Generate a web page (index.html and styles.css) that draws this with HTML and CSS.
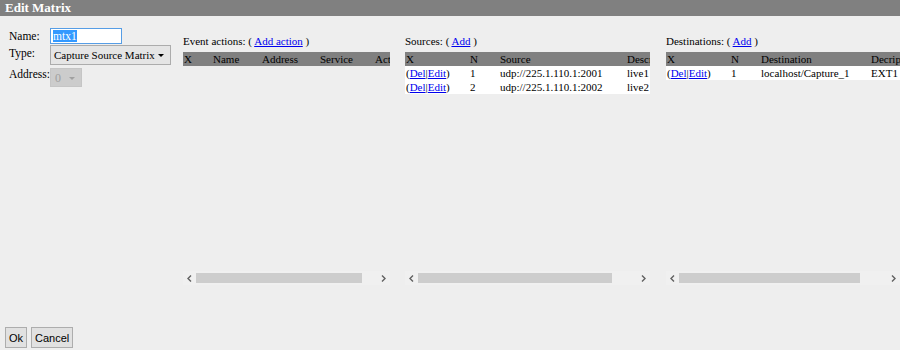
FILE: index.html
```html
<!DOCTYPE html>
<html lang="en">
<head>
  <meta charset="UTF-8">
  <title>Edit Matrix</title>
  <link rel="stylesheet" href="styles.css">
</head>
<body>
  <div class="titlebar">Edit Matrix</div>

  <div class="main">
    <div class="form">
      <div class="field">
        <label for="name">Name:</label>
        <input type="text" id="name" value="mtx1" autofocus>
      </div>
      <div class="field">
        <label>Type:</label>
        <span class="select type-select">Capture Source Matrix</span>
      </div>
      <div class="field">
        <label>Address:</label>
        <span class="select disabled">0</span>
      </div>
    </div>

    <div class="panel events">
      <div class="panel-head">Event actions: ( <a href="#">Add action</a> )</div>
      <div class="scroller">
        <table>
          <colgroup>
            <col style="width:29px"><col style="width:49px"><col style="width:58px"><col style="width:55px"><col style="width:35px">
          </colgroup>
          <tr><th>X</th><th>Name</th><th>Address</th><th>Service</th><th>Action</th></tr>
        </table>
      </div>
      <div class="hscroll">
        <span class="arrow"><svg width="5" height="7" viewBox="0 0 5 7"><path d="M4 0.5L1 3.5L4 6.5"/></svg></span>
        <span class="track"><span class="thumb" style="width:166px"></span></span>
        <span class="arrow"><svg width="5" height="7" viewBox="0 0 5 7"><path d="M1 0.5L4 3.5L1 6.5"/></svg></span>
      </div>
    </div>

    <div class="panel sources">
      <div class="panel-head">Sources: ( <a href="#">Add</a> )</div>
      <div class="scroller">
        <table>
          <colgroup>
            <col style="width:64px"><col style="width:30px"><col style="width:127px"><col style="width:56px">
          </colgroup>
          <tr><th>X</th><th>N</th><th>Source</th><th>Description</th></tr>
          <tr><td>(<a href="#">Del</a>|<a href="#">Edit</a>)</td><td>1</td><td>udp://225.1.110.1:2001</td><td>live1</td></tr>
          <tr><td>(<a href="#">Del</a>|<a href="#">Edit</a>)</td><td>2</td><td>udp://225.1.110.1:2002</td><td>live2</td></tr>
        </table>
      </div>
      <div class="hscroll">
        <span class="arrow"><svg width="5" height="7" viewBox="0 0 5 7"><path d="M4 0.5L1 3.5L4 6.5"/></svg></span>
        <span class="track"><span class="thumb" style="width:194px"></span></span>
        <span class="arrow"><svg width="5" height="7" viewBox="0 0 5 7"><path d="M1 0.5L4 3.5L1 6.5"/></svg></span>
      </div>
    </div>

    <div class="panel destinations">
      <div class="panel-head">Destinations: ( <a href="#">Add</a> )</div>
      <div class="scroller">
        <table>
          <colgroup>
            <col style="width:64px"><col style="width:30px"><col style="width:110px"><col style="width:65px">
          </colgroup>
          <tr><th>X</th><th>N</th><th>Destination</th><th>Decription</th></tr>
          <tr><td>(<a href="#">Del</a>|<a href="#">Edit</a>)</td><td>1</td><td>localhost/Capture_1</td><td>EXT1</td></tr>
        </table>
      </div>
      <div class="hscroll">
        <span class="arrow"><svg width="5" height="7" viewBox="0 0 5 7"><path d="M4 0.5L1 3.5L4 6.5"/></svg></span>
        <span class="track"><span class="thumb" style="width:181px"></span></span>
        <span class="arrow"><svg width="5" height="7" viewBox="0 0 5 7"><path d="M1 0.5L4 3.5L1 6.5"/></svg></span>
      </div>
    </div>
  </div>

  <div class="footer">
    <button>Ok</button>
    <button>Cancel</button>
  </div>

  <script>
    // 选中名称输入框中的文字
    const nameInput = document.getElementById('name');
    nameInput.focus();
    nameInput.select();
  </script>
</body>
</html>
```

FILE: styles.css
```css
* {
  margin: 0;
  padding: 0;
  box-sizing: border-box;
}

body {
  font-family: "Liberation Serif", "Times New Roman", serif;
  font-size: 11px;
  background-color: #eeeeee;
  color: #000;
  height: 100vh;
  display: flex;
  flex-direction: column;
  overflow: hidden;
}

a {
  color: #0000ee;
}

.titlebar {
  height: 16px;
  line-height: 16px;
  padding-left: 5px;
  background-color: #808080;
  color: #fff;
  font-weight: bold;
  font-size: 13px;
}

.main {
  flex: 1;
  display: flex;
  padding: 12px 0 0 5px;
}

/* 左侧表单 */
.form {
  width: 178px;
  padding-left: 4px;
  display: flex;
  flex-direction: column;
  gap: 1px;
}

.field {
  display: flex;
  align-items: flex-start;
}

.field label {
  flex: 0 0 41px;
  padding-top: 1px;
  line-height: 14px;
  white-space: nowrap;
  font-size: 11.5px;
}

.field input {
  width: 72px;
  height: 16px;
  border: 1px solid #569de5;
  outline: none;
  font-family: inherit;
  font-size: 11.5px;
  padding: 0 2px;
  background: #fff;
}

.field input::selection {
  background: #3399ff;
  color: #fff;
}

.select {
  position: relative;
  display: block;
  height: 20px;
  line-height: 18px;
  padding: 0 14px 0 3px;
  border: 1px solid #acacac;
  background-color: #e5e5e5;
  white-space: nowrap;
}

.type-select {
  width: 121px;
  font-size: 11px;
}

.select::after {
  content: "";
  position: absolute;
  right: 6px;
  top: 8px;
  border-left: 3px solid transparent;
  border-right: 3px solid transparent;
  border-top: 3px solid #000;
}

.select.disabled {
  width: 32px;
  height: 19px;
  margin-top: 2px;
  color: #a0a0a0;
  background-color: #cccccc;
  border-color: #c5c5c5;
  padding-left: 4px;
  font-size: 12px;
}

.select.disabled::after {
  right: 6px;
  border-top-color: #a0a0a0;
}

/* 列表面板 */
.panel {
  display: flex;
  flex-direction: column;
}

.events {
  width: 207px;
}

.sources {
  width: 245px;
  margin-left: 15px;
}

.destinations {
  width: 234px;
  margin-left: 16px;
}

.panel-head {
  margin-top: 6px;
  line-height: 14px;
  margin-bottom: 4px;
  white-space: nowrap;
}

.scroller {
  height: 219px;
  overflow: hidden;
}

.scroller table {
  table-layout: fixed;
  border-collapse: collapse;
  width: max-content;
}

.scroller th,
.scroller td {
  height: 14px;
  line-height: 14px;
  padding: 0 1px;
  text-align: left;
  font-weight: normal;
  white-space: nowrap;
  overflow: hidden;
}

.scroller th {
  background-color: #808080;
}

.scroller td {
  background-color: #fff;
}

/* 横向滚动条 */
.hscroll {
  display: flex;
  height: 14px;
  background-color: #f0f0f0;
}

.hscroll .arrow {
  flex: 0 0 13px;
  display: flex;
  align-items: center;
  justify-content: center;
}

.hscroll .arrow path {
  fill: none;
  stroke: #606060;
  stroke-width: 1.4;
}

.hscroll .track {
  flex: 1;
  display: flex;
  align-items: center;
}

.hscroll .thumb {
  height: 10px;
  background-color: #cdcdcd;
}

/* 底部按钮 */
.footer {
  display: flex;
  gap: 4px;
  padding: 0 0 2px 5px;
}

.footer button {
  height: 21px;
  padding: 0 3px;
  font-family: "Liberation Sans", Arial, sans-serif;
  font-size: 11px;
  background-color: #e1e1e1;
  border: 1px solid #adadad;
  color: #000;
}
```
